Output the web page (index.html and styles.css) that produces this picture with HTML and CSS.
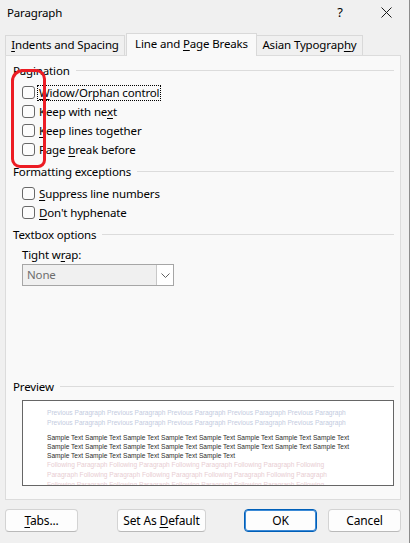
FILE: index.html
```html
<!DOCTYPE html>
<html lang="en">
<head>
  <meta charset="UTF-8" />
  <title>Paragraph</title>
  <link rel="stylesheet" href="styles.css">
</head>
<body>
  <div class="window">

    <!-- Title bar -->
    <div class="titlebar">
      <span class="title">Paragraph</span>
      <span class="cap">?</span>
      <span class="cap">
        <svg width="11" height="11" viewBox="0 0 11 11"><path d="M0.5 0.5 L10.5 10.5 M10.5 0.5 L0.5 10.5" stroke="#1a1a1a" stroke-width="1" fill="none"/></svg>
      </span>
    </div>

    <!-- Tabs -->
    <div class="tabs">
      <div class="tab tab-indents"><u>I</u>ndents and Spacing</div>
      <div class="tab tab-breaks active">Line and <u>P</u>age Breaks</div>
      <div class="tab tab-asian">Asian Typograp<u>h</u>y</div>
    </div>

    <!-- Tab page -->
    <div class="panel">
      <div class="group-title">Pagination</div>
      <div class="opts">
        <div class="opt"><span class="box"></span><span class="label focus"><u>W</u>idow/Orphan control</span></div>
        <div class="opt"><span class="box"></span><span class="label">Keep with ne<u>x</u>t</span></div>
        <div class="opt"><span class="box"></span><span class="label"><u>K</u>eep lines together</span></div>
        <div class="opt"><span class="box"></span><span class="label">Page <u>b</u>reak before</span></div>
      </div>

      <div class="group-title spaced">Formatting exceptions</div>
      <div class="opts">
        <div class="opt"><span class="box"></span><span class="label"><u>S</u>uppress line numbers</span></div>
        <div class="opt"><span class="box"></span><span class="label"><u>D</u>on't hyphenate</span></div>
      </div>

      <div class="group-title spaced">Textbox options</div>
      <div class="field-label">Tight w<u>r</u>ap:</div>
      <div class="select">
        <span class="value">None</span>
        <span class="arrow">
          <svg width="9" height="5" viewBox="0 0 9 5"><path d="M0.5 0.5 L4.5 4.5 L8.5 0.5" stroke="#606060" stroke-width="1" fill="none"/></svg>
        </span>
      </div>

      <div class="preview">
        <div class="group-title">Preview</div>
        <div class="preview-box">
          <div class="prev">Previous Paragraph Previous Paragraph Previous Paragraph Previous Paragraph Previous Paragraph</div>
          <div class="prev">Previous Paragraph Previous Paragraph Previous Paragraph Previous Paragraph Previous Paragraph</div>
          <div class="sample">
            <div>Sample Text Sample Text Sample Text Sample Text Sample Text Sample Text Sample Text Sample Text</div>
            <div>Sample Text Sample Text Sample Text Sample Text Sample Text Sample Text Sample Text Sample Text</div>
            <div>Sample Text Sample Text Sample Text Sample Text Sample Text</div>
          </div>
          <div class="follow">Following Paragraph Following Paragraph Following Paragraph Following Paragraph Following</div>
          <div class="follow">Paragraph Following Paragraph Following Paragraph Following Paragraph Following Paragraph</div>
          <div class="follow">Following Paragraph Following Paragraph Following Paragraph Following Paragraph Following</div>
        </div>
      </div>

      <!-- hand drawn red mark over the checkboxes -->
      <div class="annot"></div>
    </div>

    <!-- Buttons -->
    <div class="buttons">
      <button class="btn btn-tabs"><u>T</u>abs...</button>
      <button class="btn btn-default">Set As <u>D</u>efault</button>
      <button class="btn btn-ok">OK</button>
      <button class="btn btn-cancel">Cancel</button>
    </div>
  </div>
</body>
</html>
```

FILE: styles.css
```css
* {
  box-sizing: border-box;
}
body {
  margin: 0;
  background: #fff;
  font-family: "Noto Sans", sans-serif;
  font-size: 11.5px;
  letter-spacing: -0.15px;
  color: #000;
}
u {
  text-decoration-thickness: 1px;
  text-underline-offset: 2px;
}
.window {
  width: 410px;
  height: 543px;
  background: #f0f0f0;
  border-right: 1px solid #8c8c8c;
}

/* title bar */
.titlebar {
  height: 24px;
  display: flex;
  align-items: center;
  padding-left: 7px;
}
.title {
  flex: 1;
}
.cap {
  width: 46px;
  display: flex;
  justify-content: center;
  align-items: center;
  font-size: 13px;
}

/* tabs */
.tabs {
  height: 31px;
  display: flex;
  align-items: flex-end;
  padding-left: 5px;
}
.tab {
  height: 20px;
  line-height: 18px;
  text-align: center;
  border: 1px solid #d9d9d9;
  border-bottom: none;
  background: #f0f0f0;
}
.tab-indents {
  width: 120px;
}
.tab-breaks {
  width: 131px;
  margin-left: 1px;
}
.tab-asian {
  width: 107px;
  margin-left: -1px;
}
.tab.active {
  height: 23px;
  line-height: 20px;
  margin-bottom: -1px;
  background: #f9f9f9;
  position: relative;
  z-index: 1;
}

/* panel */
.panel {
  position: relative;
  margin-left: 5px;
  width: 396px;
  height: 445px;
  border: 1px solid #dcdcdc;
  background: #f9f9f9;
  padding: 7px 6px 13px 7px;
  display: flex;
  flex-direction: column;
}
.group-title {
  display: flex;
  align-items: center;
  height: 16px;
  line-height: 16px;
}
.group-title::after {
  content: "";
  flex: 1;
  height: 1px;
  margin: -1px 0 0 6px;
  background: #dcdcdc;
}
.group-title.spaced {
  margin-top: 5px;
}
.opts {
  margin: 4px 0 0 9px;
}
.opt {
  height: 19px;
  display: flex;
  align-items: center;
}
.box {
  width: 13px;
  height: 13px;
  border: 1px solid #686868;
  border-radius: 3px;
  background: #fcfcfc;
  margin-right: 2px;
}
.label {
  border: 1px solid transparent;
  padding: 0 1px;
  line-height: 14px;
}
.label.focus {
  border: 1px dotted #000;
}
.field-label {
  margin: 4px 0 0 9px;
  height: 16px;
  line-height: 16px;
}
.select {
  display: flex;
  width: 152px;
  height: 22px;
  margin: 1px 0 0 9px;
  border: 1px solid #a6a6a6;
  background: #f0f0f0;
}
.select .value {
  flex: 1;
  padding-left: 4px;
  line-height: 20px;
  color: #6d6d6d;
}
.select .arrow {
  width: 17px;
  background: #fff;
  border-left: 1px solid #c8c8c8;
  display: flex;
  align-items: center;
  justify-content: center;
}

/* preview */
.preview {
  margin-top: auto;
}
.preview-box {
  margin: 5px 0 0 9px;
  width: 372px;
  height: 86px;
  border: 1px solid #666;
  background: #fff;
  padding: 7px 0 0 24px;
  overflow: hidden;
  font-family: "Liberation Sans", sans-serif;
  font-size: 6.6px;
  letter-spacing: 0;
  white-space: nowrap;
}
.prev {
  line-height: 10px;
  color: #c3cbe0;
}
.sample {
  margin-top: 4.5px;
  line-height: 9px;
  color: #2e2e2e;
}
.follow {
  line-height: 10px;
  color: #e8cdd2;
}

.annot {
  position: absolute;
  left: 5px;
  top: 13px;
  width: 35px;
  height: 99px;
  border: 3px solid #ec1c24;
  border-radius: 12px 10px 8px 9px;
}

/* buttons */
.buttons {
  display: flex;
  margin: 9px 0 0 5px;
}
.btn {
  height: 23px;
  padding: 0;
  font-family: inherit;
  font-size: 12px;
  letter-spacing: -0.15px;
  color: #000;
  background: #fdfdfd;
  border: 1px solid #d3d3d3;
  border-bottom-color: #b9b9b9;
  border-radius: 4px;
}
.btn-tabs {
  width: 73px;
}
.btn-default {
  width: 89px;
  margin-left: 39px;
}
.btn-ok {
  width: 73px;
  margin-left: 38px;
  border: 1px solid #005fb8;
  box-shadow: inset 0 0 0 1px #3c8ad6;
}
.btn-cancel {
  width: 73px;
  margin-left: 11px;
}
```
